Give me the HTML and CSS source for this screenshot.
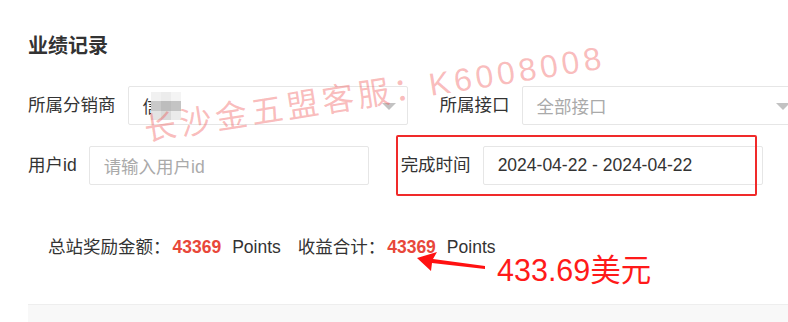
FILE: index.html
```html
<!DOCTYPE html>
<html lang="zh-CN">
<head>
<meta charset="utf-8">
<title>业绩记录</title>
<link rel="stylesheet" href="styles.css">
</head>
<body>
<div class="page">
  <h2 class="title">业绩记录</h2>
  <div class="filters">
    <div class="row">
      <div class="item">
        <span class="label">所属分销商</span>
        <div class="select">
          <span class="val">信</span>
          <span class="mosaic">
            <i class="m1"></i><i class="m2"></i><i class="m3"></i>
            <i class="m4"></i><i class="m5"></i><i class="m6"></i>
            <i class="m7"></i><i class="m8"></i><i class="m9"></i>
          </span>
          <i class="caret"></i>
        </div>
      </div>
      <div class="item">
        <span class="label">所属接口</span>
        <div class="select">
          <span class="ph">全部接口</span>
          <i class="caret"></i>
        </div>
      </div>
    </div>
    <div class="row">
      <div class="item">
        <span class="label">用户id</span>
        <div class="input"><span class="ph">请输入用户id</span></div>
      </div>
      <div class="item">
        <span class="label">完成时间</span>
        <div class="input"><span class="val">2024-04-22 - 2024-04-22</span></div>
      </div>
    </div>
  </div>
  <div class="summary">
    <span>总站奖励金额：</span><b class="num">43369</b><span class="unit">Points</span>
    <span>收益合计：</span><b class="num">43369</b><span class="unit">Points</span>
  </div>
  <div class="table-head"></div>
</div>

<div class="redbox"></div>
<svg class="arrow" width="80" height="30" viewBox="0 0 80 30">
  <polygon points="2,8 22,2 18,9 70,16 70,19 17,13 16,21" fill="#ff1111"/>
</svg>
<div class="note">433.69美元</div>
<div class="watermark">长沙金五盟客服：K6008008</div>
</body>
</html>
```

FILE: styles.css
```css
html, body {
  margin: 0;
  padding: 0;
  overflow: hidden;
  background: #fff;
}
body {
  width: 788px;
  height: 322px;
  position: relative;
  font-family: "Liberation Sans", "Noto Sans CJK SC", sans-serif;
  color: #333;
  font-size: 17.5px;
}
.page {
  padding-left: 28px;
}
.title {
  margin: 0;
  padding-top: 34px;
  font-size: 20px;
  line-height: 24px;
  font-weight: bold;
  color: #333;
}
.filters {
  margin-top: 28px;
  display: flex;
  flex-direction: column;
  gap: 21px;
}
.row {
  display: flex;
  align-items: center;
  white-space: nowrap;
}
.item {
  display: flex;
  align-items: center;
  margin-right: 32px;
  flex-shrink: 0;
}
.label {
  margin-right: 12px;
  line-height: 39px;
  color: #333;
}
.select, .input {
  position: relative;
  width: 280px;
  height: 39px;
  box-sizing: border-box;
  border: 1px solid #e6e6e6;
  border-radius: 2px;
  padding: 0 14px;
  display: flex;
  align-items: center;
  flex-shrink: 0;
  background: #fff;
}
.ph {
  color: #aaa;
}
.val {
  color: #333;
}
.caret {
  position: absolute;
  right: 11px;
  top: 16px;
  width: 0;
  height: 0;
  border-left: 7px solid transparent;
  border-right: 7px solid transparent;
  border-top: 7px solid #c2c2c2;
}
.mosaic {
  position: absolute;
  left: 22px;
  top: 5px;
  width: 30px;
  height: 28px;
  display: grid;
  grid-template-columns: repeat(3, 10px);
  grid-template-rows: 9px 10px 9px;
}
.mosaic i { display: block; }
.m1 { background: #f1f1f1; }
.m2 { background: #ececec; }
.m3 { background: #f4f4f4; }
.m4 { background: #c9c9c9; }
.m5 { background: #bdbdbd; }
.m6 { background: #c4c4c4; }
.m7 { background: #e4e4e4; }
.m8 { background: #dadada; }
.m9 { background: #ebebeb; }

.summary {
  margin-top: 50px;
  padding-left: 20px;
  line-height: 24px;
  white-space: nowrap;
  color: #333;
}
.num {
  color: #e8473a;
  font-weight: bold;
  margin-left: 2px;
  margin-right: 11px;
}
.unit {
  margin-right: 12px;
}
.table-head {
  margin-top: 45px;
  height: 30px;
  background: #f8f8f8;
  border-top: 1px solid #eeeeee;
}

.redbox {
  position: absolute;
  left: 396px;
  top: 135px;
  width: 361px;
  height: 61px;
  box-sizing: border-box;
  border: 2px solid #f02a2a;
  border-radius: 2px;
}
.arrow {
  position: absolute;
  left: 415px;
  top: 250px;
}
.note {
  position: absolute;
  left: 497px;
  top: 252px;
  font-size: 30.5px;
  line-height: 36px;
  color: #ff1a1a;
  white-space: nowrap;
}
.watermark {
  position: absolute;
  left: 147px;
  top: 114px;
  font-size: 32px;
  line-height: 32px;
  letter-spacing: 4px;
  color: rgba(240, 80, 80, 0.38);
  white-space: nowrap;
  transform: rotate(-9deg);
  transform-origin: left bottom;
  pointer-events: none;
}
```
